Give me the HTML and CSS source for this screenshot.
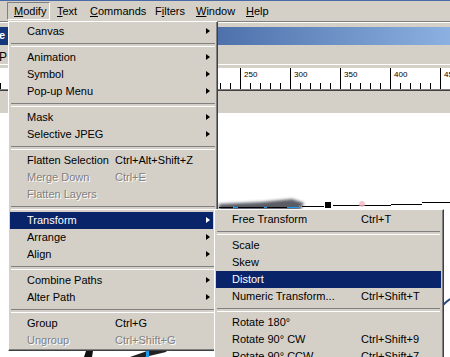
FILE: index.html
```html
<!DOCTYPE html>
<html>
<head>
<meta charset="utf-8">
<link rel="stylesheet" href="styles.css">
</head>
<body>
<div class="screen">
  <div class="menubar">
    <span class="mb-item mb-modify active"><u>M</u>odify</span>
    <span class="mb-item mb-text"><u>T</u>ext</span>
    <span class="mb-item mb-commands"><u>C</u>ommands</span>
    <span class="mb-item mb-filters">F<u>i</u>lters</span>
    <span class="mb-item mb-window"><u>W</u>indow</span>
    <span class="mb-item mb-help"><u>H</u>elp</span>
  </div>
  <div class="barline"></div>
  <div class="titlebar"><span class="title">e</span></div>
  <div class="toolbar"><span class="tb-text">P</span></div>
  <div class="ruler">
    <div class="seg"></div>
    <div class="seg"></div>
    <div class="seg"></div>
    <div class="seg"></div>
    <div class="seg"></div>
    <div class="seg"><span class="num">250</span></div>
    <div class="seg"><span class="num">300</span></div>
    <div class="seg"><span class="num">350</span></div>
    <div class="seg"><span class="num">400</span></div>
    <div class="seg"><span class="num">45</span></div>
  </div>
  <div class="underruler"></div>
  <div class="canvas"></div>

  <svg class="drawing" width="450" height="357" viewBox="0 0 450 357">
    <defs>
      <filter id="blur" x="-20%" y="-100%" width="140%" height="300%">
        <feGaussianBlur stdDeviation="1.6"/>
      </filter>
    </defs>
    <path d="M219 204 L262 202 L292 199 L304 203 L300 210 L219 211 Z" fill="#3c414c" opacity="0.85" filter="url(#blur)"/>
    <path d="M219 207.5 H300 M302 206.5 H324 M333 205.5 H391 M391 204.5 H422 M422 202.5 H450" stroke="#000" stroke-width="1"/>
    <rect x="325" y="202" width="6" height="6" fill="#000"/>
    <circle cx="362" cy="204" r="3" fill="#f3b8c0" opacity="0.8"/>
    <path d="M233 207.5 H238 M264 207.5 H267 M287 207.5 H300" stroke="#1c9cf0" stroke-width="1"/>
    <path d="M233.5 206 V209 M299.5 205 V209" stroke="#1c9cf0" stroke-width="1"/>
    <path d="M442 306 C445 303 447 301 450 299" stroke="#2a4a80" stroke-width="2" fill="none"/>
    <path d="M84 357 L86 351 L93 351 L92 357 Z" fill="#111"/>
    <path d="M130 357 L150 350 L168 349 L166 352 L145 357 Z" fill="#222"/>
    <rect x="146" y="349" width="3" height="8" fill="#1c9cf0"/>
  </svg>

  <div class="menu main-menu">
    <div class="item"><span class="label">Canvas</span><span class="arrow"></span></div>
    <div class="sep"></div>
    <div class="item"><span class="label">Animation</span><span class="arrow"></span></div>
    <div class="item"><span class="label">Symbol</span><span class="arrow"></span></div>
    <div class="item"><span class="label">Pop-up Menu</span><span class="arrow"></span></div>
    <div class="sep"></div>
    <div class="item"><span class="label">Mask</span><span class="arrow"></span></div>
    <div class="item"><span class="label">Selective JPEG</span><span class="arrow"></span></div>
    <div class="sep"></div>
    <div class="item"><span class="label">Flatten Selection</span><span class="key">Ctrl+Alt+Shift+Z</span></div>
    <div class="item disabled"><span class="label">Merge Down</span><span class="key">Ctrl+E</span></div>
    <div class="item disabled"><span class="label">Flatten Layers</span></div>
    <div class="sep"></div>
    <div class="item selected"><span class="label">Transform</span><span class="arrow"></span></div>
    <div class="item"><span class="label">Arrange</span><span class="arrow"></span></div>
    <div class="item"><span class="label">Align</span><span class="arrow"></span></div>
    <div class="sep"></div>
    <div class="item"><span class="label">Combine Paths</span><span class="arrow"></span></div>
    <div class="item"><span class="label">Alter Path</span><span class="arrow"></span></div>
    <div class="sep"></div>
    <div class="item"><span class="label">Group</span><span class="key">Ctrl+G</span></div>
    <div class="item disabled"><span class="label">Ungroup</span><span class="key">Ctrl+Shift+G</span></div>
  </div>

  <div class="menu sub-menu">
    <div class="item"><span class="label">Free Transform</span><span class="key">Ctrl+T</span></div>
    <div class="sep"></div>
    <div class="item"><span class="label">Scale</span></div>
    <div class="item"><span class="label">Skew</span></div>
    <div class="item selected"><span class="label">Distort</span></div>
    <div class="item"><span class="label">Numeric Transform...</span><span class="key">Ctrl+Shift+T</span></div>
    <div class="sep"></div>
    <div class="item"><span class="label">Rotate 180°</span></div>
    <div class="item"><span class="label">Rotate 90° CW</span><span class="key">Ctrl+Shift+9</span></div>
    <div class="item"><span class="label">Rotate 90° CCW</span><span class="key">Ctrl+Shift+7</span></div>
  </div>
</div>
</body>
</html>
```

FILE: styles.css
```css
* { box-sizing: border-box; }

html, body {
  margin: 0;
  padding: 0;
  background: #ffffff;
}

.screen {
  position: relative;
  width: 450px;
  height: 357px;
  overflow: hidden;
  background: #ffffff;
  font-family: "Liberation Sans", Arial, sans-serif;
  font-size: 11px;
  color: #000;
}

/* ---------- menu bar ---------- */
.menubar {
  height: 21px;
  border-top: 1px solid #4a6aa6;
  background: #d4d0c8;
  display: flex;
  padding-top: 1px;
  padding-left: 7px;
}

.mb-item {
  height: 18px;
  line-height: 16px;
  padding-left: 6px;
  border: 1px solid transparent;
  white-space: nowrap;
}

.mb-item u { text-decoration: underline; text-underline-offset: 1px; }

.mb-item.active {
  border-color: #808080 #ffffff #ffffff #808080;
}

.mb-modify { width: 43px; }
.mb-text { width: 33px; }
.mb-commands { width: 65px; }
.mb-filters { width: 41px; }
.mb-window { width: 50px; }
.mb-help { width: 40px; }

.barline {
  height: 6px;
  background: #d4d0c8;
  border-top: 1px solid #808080;
  box-shadow: inset 0 1px 0 #ffffff;
}

/* ---------- document window ---------- */
.titlebar {
  height: 18px;
  background: linear-gradient(to right, #14367a 0px, #5073ad 225px, #8cb0e0 450px);
  overflow: hidden;
}

.title {
  display: block;
  margin-left: -1px;
  margin-top: 2px;
  color: #ffffff;
  font-weight: bold;
  line-height: 13px;
}

.toolbar {
  height: 20px;
  background: #d4d0c8;
  border-bottom: 1px solid #ffffff;
  overflow: hidden;
}

.tb-text {
  display: block;
  margin-top: 6px;
  margin-left: -1px;
  font-size: 12px;
  line-height: 12px;
}

.ruler {
  height: 24px;
  border-top: 3px solid #d4d0c8;
  background: #ffffff;
  display: flex;
  margin-left: -10px;
  overflow: hidden;
}

.seg {
  flex: 0 0 50px;
  height: 21px;
  border-left: 1px solid #000;
  background-image:
    linear-gradient(#000, #000),
    linear-gradient(#000, #000),
    linear-gradient(#000, #000),
    linear-gradient(#000, #000);
  background-repeat: no-repeat;
  background-size: 1px 6px;
  background-position: 9px 15px, 19px 15px, 29px 15px, 39px 15px;
}

.num {
  display: block;
  font-size: 8px;
  line-height: 8px;
  padding-left: 3px;
  padding-top: 3px;
}

.underruler {
  height: 24px;
  background: #d4d0c8;
  border-top: 1px solid #808080;
  box-shadow: inset 0 1px 0 #404040;
}

.canvas {
  height: 260px;
  background: #ffffff;
}

.drawing {
  position: absolute;
  left: 0;
  top: 0;
}

/* ---------- dropdown menus ---------- */
.menu {
  position: absolute;
  background: #d4d0c8;
  border-top: 1px solid #ffffff;
  border-left: 1px solid #ffffff;
  border-right: 1px solid #404040;
  border-bottom: 1px solid #404040;
  box-shadow: inset -1px -1px 0 #808080;
  padding: 1px;
}

.main-menu {
  left: 8px;
  top: 21px;
  width: 210px;
  padding-right: 4px;
}

.sub-menu {
  left: 214px;
  top: 209px;
  width: 230px;
  padding-right: 2px;
}

.item {
  display: flex;
  align-items: center;
  height: 17px;
  line-height: 17px;
  position: relative;
  white-space: nowrap;
}

.main-menu .item { padding-left: 17px; }
.main-menu .label { width: 88px; }

.sub-menu .item { padding-left: 16px; }
.sub-menu .label { width: 129px; }

.item.selected {
  background: #0a246a;
  color: #ffffff;
}

.item.disabled {
  color: #808080;
  text-shadow: 1px 1px 0 #ffffff;
}

.arrow {
  position: absolute;
  right: 3px;
  top: 5px;
  width: 0;
  height: 0;
  border-top: 3.5px solid transparent;
  border-bottom: 3.5px solid transparent;
  border-left: 4px solid #000;
}

.item.selected .arrow { border-left-color: #ffffff; }

.sep {
  height: 9px;
  position: relative;
}

.sep::after {
  content: "";
  position: absolute;
  top: 3px;
  left: 1px;
  right: -2px;
  height: 2px;
  border-top: 1px solid #808080;
  border-bottom: 1px solid #ffffff;
}

.sub-menu .sep::after {
  left: 1px;
  right: 1px;
}
```
